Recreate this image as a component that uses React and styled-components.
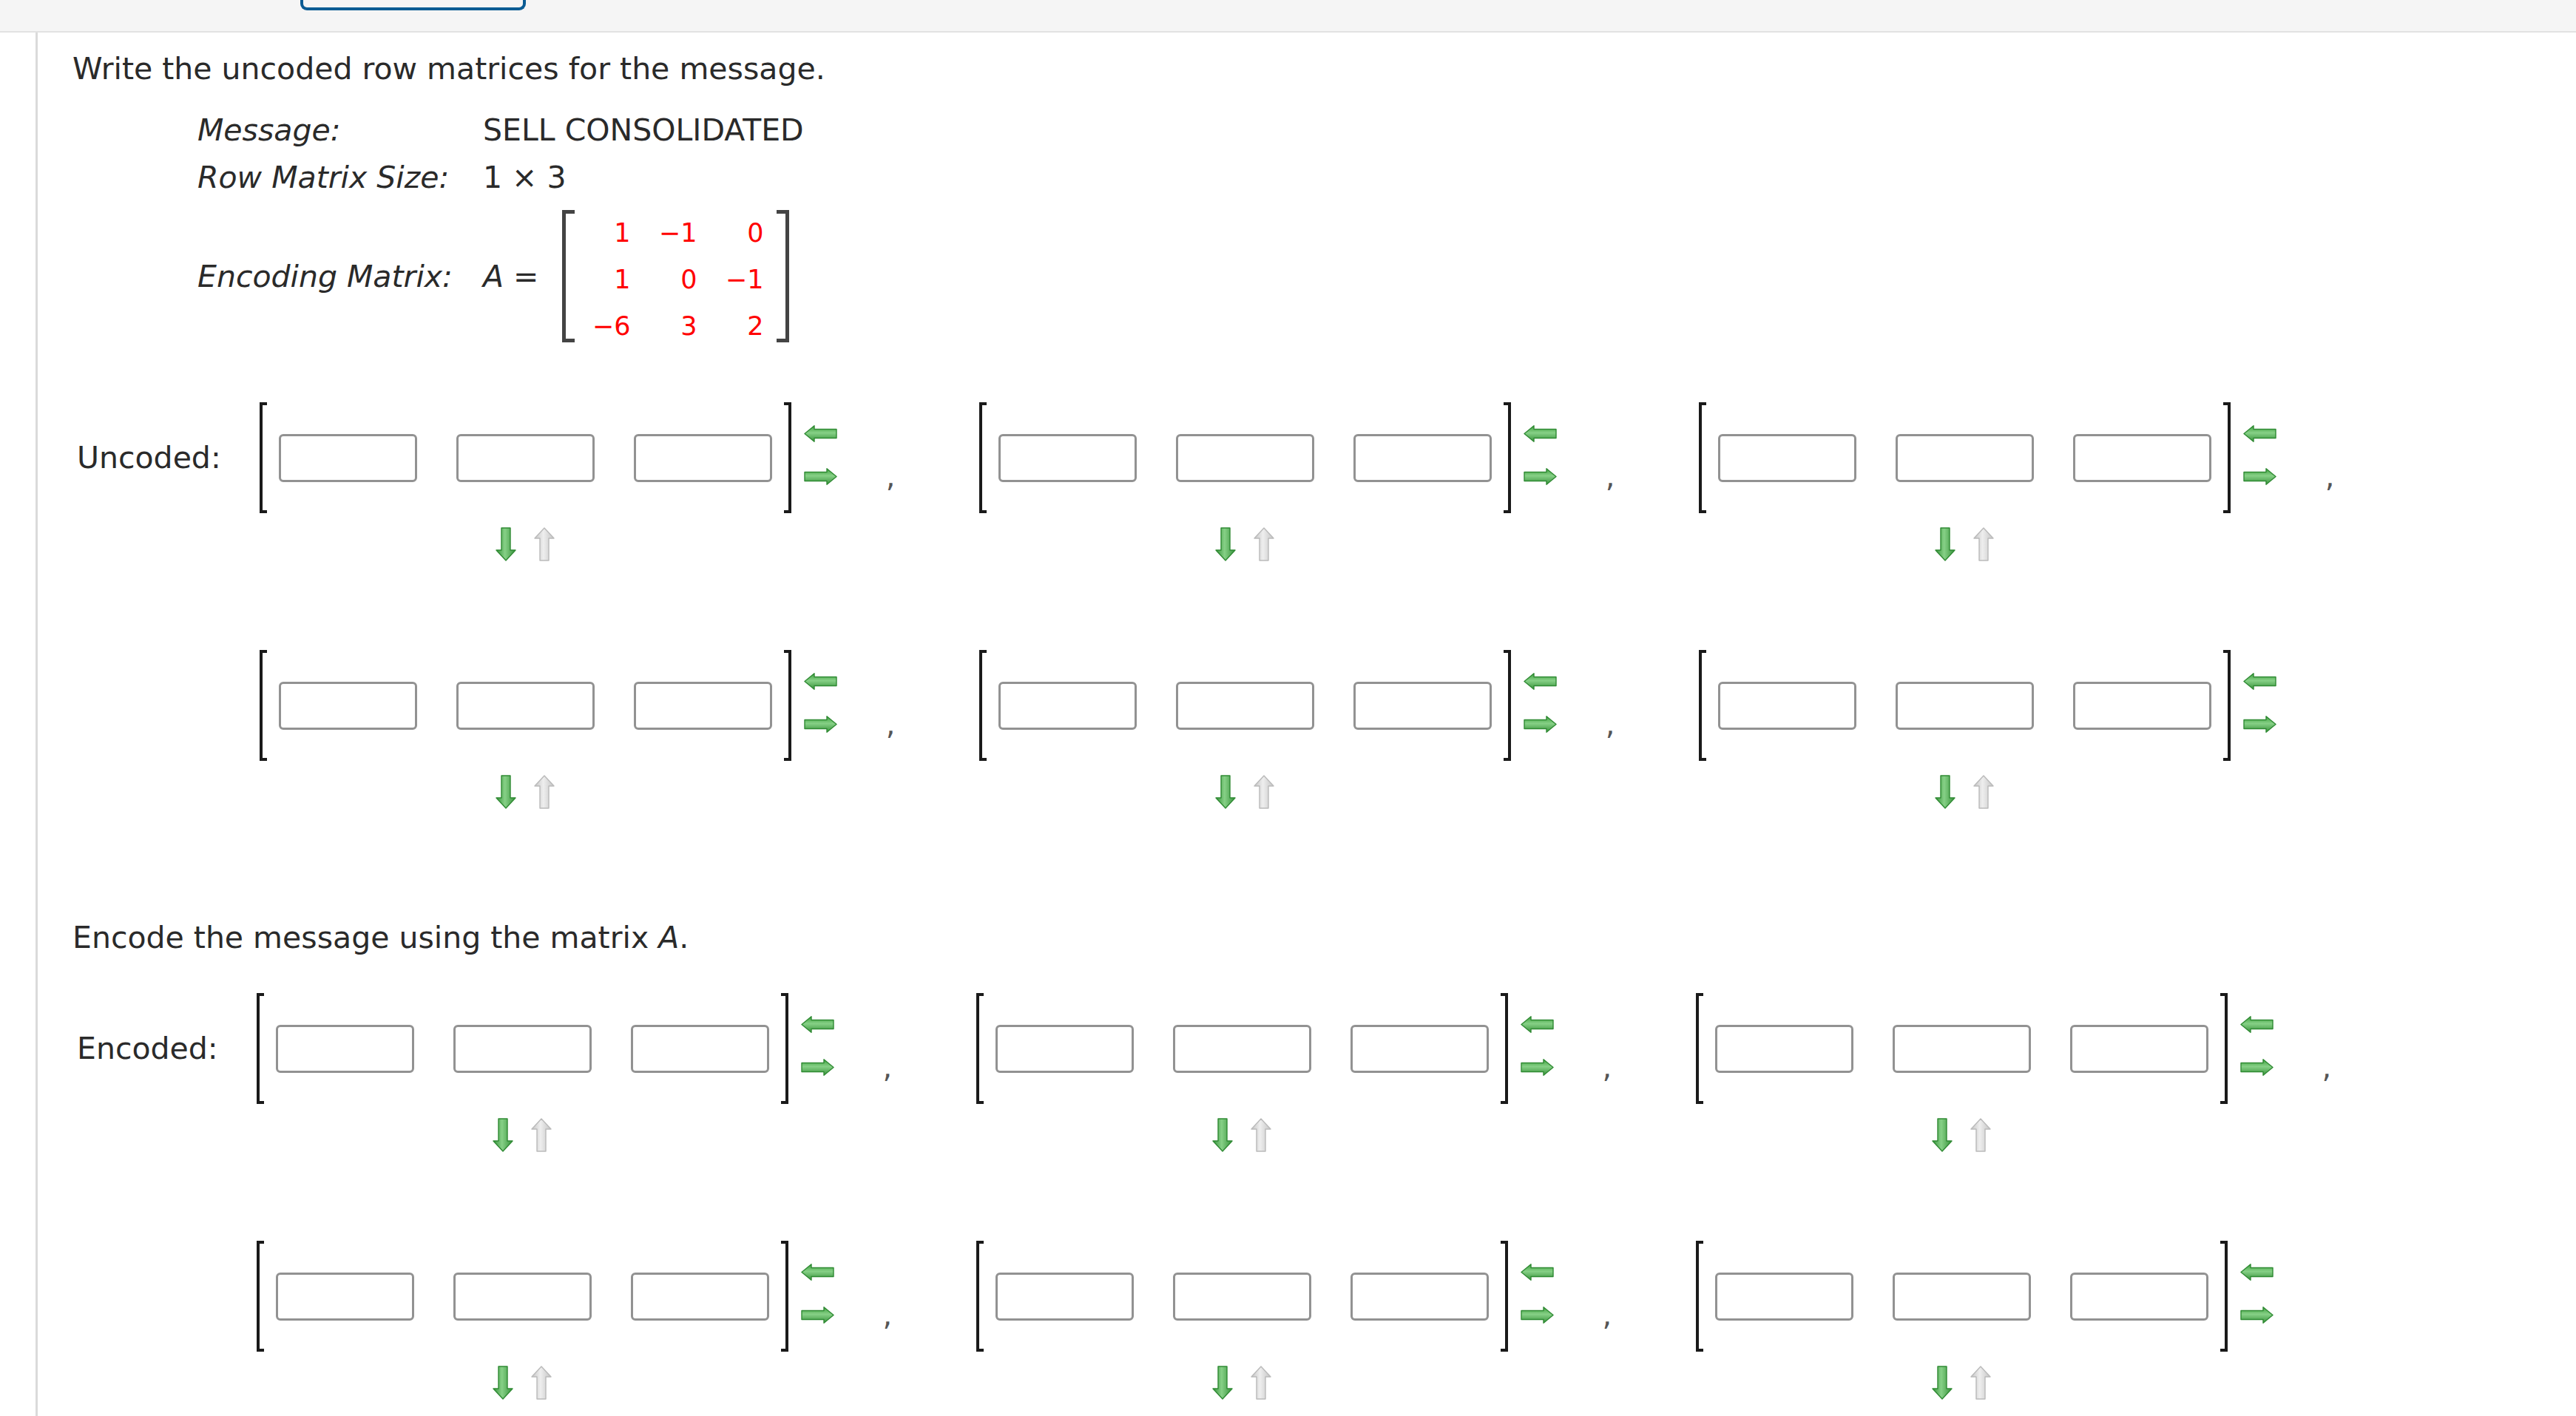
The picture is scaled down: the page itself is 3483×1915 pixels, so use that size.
import React, { useId } from "react";
import styled, { createGlobalStyle } from "styled-components";

const GlobalStyle = createGlobalStyle`
  html, body {
    margin: 0;
    padding: 0;
    background: #fff;
  }
  body {
    font-family: "DejaVu Sans", Verdana, sans-serif;
    color: #2a2a2a;
  }
`;

const TopBar = styled.div`
  height: 42px;
  background: #f5f5f5;
  border-bottom: 2px solid #e2e2e2;
  padding-left: 406px;
`;

const TabButton = styled.div`
  width: 297px;
  height: 10px;
  border: 4px solid #0b5c94;
  border-top: none;
  border-radius: 0 0 9px 9px;
`;

const Panel = styled.main`
  margin-left: 48px;
  border-left: 3px solid #dadada;
  padding: 17px 0 40px 47px;
  min-height: 1900px;
`;

const Prompt = styled.p`
  margin: ${(p) => p.$top || 0}px 0 0;
  font-size: 41px;
  line-height: 64px;
`;

const Em = styled.i`
  font-style: italic;
`;

const InfoGrid = styled.div`
  display: grid;
  grid-template-columns: 386px auto;
  align-items: center;
  margin: 19px 0 0 169px;
  font-size: 41px;
  line-height: 64px;
`;

const InfoLabel = styled.div`
  font-style: italic;
  margin-top: ${(p) => (p.$pushed ? 12 : 0)}px;
`;

const InfoValue = styled.div`
  display: flex;
  align-items: center;
  margin-top: ${(p) => (p.$pushed ? 12 : 0)}px;
`;

const BigMatrix = styled.div`
  display: flex;
  height: 179px;
  margin-left: 32px;
`;

const BigBracket = styled.div`
  width: 12px;
  border: 5px solid #444;
  ${(p) => (p.$right ? "border-left: none;" : "border-right: none;")}
`;

const BigCells = styled.div`
  display: grid;
  grid-template-columns: 75px 90px 90px;
  grid-auto-rows: 63px;
  padding-right: 18px;
  font-size: 35px;
  line-height: 63px;
  text-align: right;
  color: #f00;
`;

const AnswerBlock = styled.div`
  display: flex;
  align-items: flex-start;
  margin-top: ${(p) => p.$top}px;
`;

const RowLabel = styled.div`
  padding: 0 52px 0 6px;
  font-size: 41px;
  line-height: 150px;
  white-space: nowrap;
`;

const MatrixGrid = styled.div`
  display: grid;
  grid-template-columns: repeat(3, 973px);
  row-gap: 120px;
`;

const MatrixItem = styled.div`
  display: flex;
  align-items: flex-start;
`;

const MatrixColumn = styled.div`
  display: flex;
  flex-direction: column;
`;

const RowMatrix = styled.div`
  display: flex;
  height: 150px;
`;

const Bracket = styled.div`
  width: 6px;
  border: 4px solid #1a1a1a;
  ${(p) => (p.$right ? "border-left: none;" : "border-right: none;")}
`;

const Cells = styled.div`
  display: flex;
  align-items: center;
  gap: 53px;
  padding: 0 16px;
`;

const Cell = styled.input`
  box-sizing: border-box;
  width: 187px;
  height: 65px;
  margin: 0;
  border: 3px solid #929292;
  border-radius: 6px;
  background: #fff;
  outline: none;
`;

const Reorder = styled.div`
  display: flex;
  justify-content: center;
  gap: 24px;
  margin-top: 19px;
  height: 46px;
`;

const SideArrows = styled.div`
  display: flex;
  flex-direction: column;
  gap: 35px;
  padding-top: 31px;
  margin-left: 17px;
`;

const Comma = styled.span`
  margin: 68px 0 0 66px;
  font-size: 40px;
  line-height: 64px;
  color: #555;
`;

const SideArrow = ({ right }) => {
  const id = useId();
  return (
    <svg width="45" height="23" viewBox="0 0 45 23">
      <defs>
        <linearGradient id={id} x1="0" y1="0" x2="0" y2="1">
          <stop offset="0" stopColor="#3f9f3f" />
          <stop offset="0.45" stopColor="#86d086" />
          <stop offset="1" stopColor="#37923a" />
        </linearGradient>
      </defs>
      <path
        d="M1 11.5 L14 0.8 L14 5.5 L44 5.5 L44 17.5 L14 17.5 L14 22.2 Z"
        transform={right ? "matrix(-1 0 0 1 45 0)" : undefined}
        fill={`url(#${id})`}
        stroke="#2f8a33"
        strokeWidth="1.4"
        strokeLinejoin="round"
      />
    </svg>
  );
};

const VertArrow = ({ up }) => {
  const id = useId();
  const dark = up ? "#c4c4c4" : "#36923a";
  const light = up ? "#eeeeee" : "#86d086";
  return (
    <svg width="28" height="46" viewBox="0 0 28 46">
      <defs>
        <linearGradient id={id} x1="0" y1="0" x2="1" y2="0">
          <stop offset="0" stopColor={dark} />
          <stop offset="0.45" stopColor={light} />
          <stop offset="1" stopColor={dark} />
        </linearGradient>
      </defs>
      <path
        d="M8 1 L20 1 L20 31 L27 31 L14 45 L1 31 L8 31 Z"
        transform={up ? "matrix(1 0 0 -1 0 46)" : undefined}
        fill={`url(#${id})`}
        stroke={up ? "#bababa" : "#2f8a33"}
        strokeWidth="1.4"
        strokeLinejoin="round"
      />
    </svg>
  );
};

const AnswerMatrix = ({ comma }) => (
  <MatrixItem>
    <MatrixColumn>
      <RowMatrix>
        <Bracket />
        <Cells>
          <Cell type="text" />
          <Cell type="text" />
          <Cell type="text" />
        </Cells>
        <Bracket $right />
      </RowMatrix>
      <Reorder>
        <VertArrow />
        <VertArrow up />
      </Reorder>
    </MatrixColumn>
    <SideArrows>
      <SideArrow />
      <SideArrow right />
    </SideArrows>
    {comma && <Comma>,</Comma>}
  </MatrixItem>
);

const AnswerSet = ({ label, top }) => (
  <AnswerBlock $top={top}>
    <RowLabel>{label}</RowLabel>
    <MatrixGrid>
      {[0, 1, 2, 3, 4, 5].map((i) => (
        <AnswerMatrix key={i} comma={i < 5} />
      ))}
    </MatrixGrid>
  </AnswerBlock>
);

const encoding = ["1", "−1", "0", "1", "0", "−1", "−6", "3", "2"];

export default function App() {
  return (
    <>
      <GlobalStyle />
      <TopBar>
        <TabButton />
      </TopBar>
      <Panel>
        <Prompt>Write the uncoded row matrices for the message.</Prompt>
        <InfoGrid>
          <InfoLabel>Message:</InfoLabel>
          <InfoValue>SELL CONSOLIDATED</InfoValue>
          <InfoLabel>Row Matrix Size:</InfoLabel>
          <InfoValue>1 × 3</InfoValue>
          <InfoLabel $pushed>Encoding Matrix:</InfoLabel>
          <InfoValue $pushed>
            <Em>A</Em>&nbsp;=
            <BigMatrix>
              <BigBracket />
              <BigCells>
                {encoding.map((n, i) => (
                  <span key={i}>{n}</span>
                ))}
              </BigCells>
              <BigBracket $right />
            </BigMatrix>
          </InfoValue>
        </InfoGrid>
        <AnswerSet label="Uncoded:" top={81} />
        <Prompt $top={142}>
          Encode the message using the matrix <Em>A</Em>.
        </Prompt>
        <AnswerSet label="Encoded:" top={43} />
      </Panel>
    </>
  );
}
